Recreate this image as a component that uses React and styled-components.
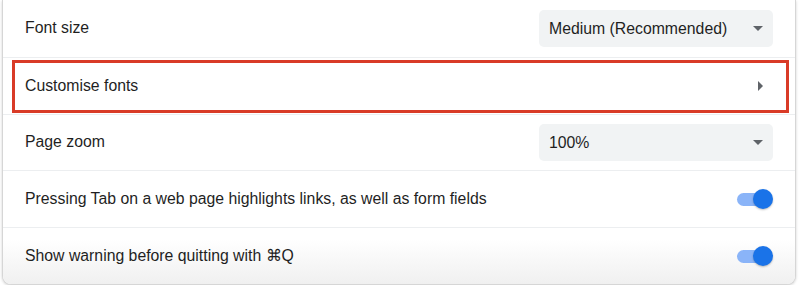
import React from 'react';
import styled, { createGlobalStyle } from 'styled-components';

const GlobalStyle = createGlobalStyle`
    html, body {
        margin: 0;
        padding: 0;
        background: #ffffff;
    }
    body {
        font-family: "Liberation Sans", Arial, sans-serif;
        color: #202124;
    }
`;

const Page = styled.div`
    width: 800px;
    height: 285px;
    padding: 0 4px 0 2px;
    box-sizing: border-box;
    overflow: hidden;
`;

const Card = styled.div`
    background: #ffffff;
    border: 1px solid #d6d6d6;
    border-top: none;
    border-radius: 0 0 9px 9px;
    box-shadow: 0 1px 3px rgba(0, 0, 0, 0.18);
    overflow: hidden;
`;

const Row = styled.div`
    position: relative;
    height: ${(p) => p.h || 57}px;
    display: flex;
    align-items: center;
    justify-content: space-between;
    padding: 0 22px;
    border-top: ${(p) => (p.first ? 'none' : '1px solid #eceef0')};
    background: ${(p) => (p.fade ? 'linear-gradient(#ffffff 20%, #f0f0f0)' : '#ffffff')};
    box-sizing: border-box;
`;

const Label = styled.span`
    font-size: 15.8px;
    color: #1f1f1f;
    margin-top: -1px;
`;

const Select = styled.div`
    width: 234px;
    height: 37px;
    border-radius: 5px;
    background: #f1f3f4;
    display: flex;
    align-items: center;
    justify-content: space-between;
    padding: 0 10px 0 10px;
    box-sizing: border-box;
    font-size: 15.8px;
    color: #1f1f1f;
`;

const DownArrow = styled.span`
    width: 0;
    height: 0;
    border-left: 5px solid transparent;
    border-right: 5px solid transparent;
    border-top: 5px solid #5f6368;
`;

const RightArrow = styled.span`
    width: 0;
    height: 0;
    margin-right: 10px;
    margin-top: -1px;
    border-top: 5px solid transparent;
    border-bottom: 5px solid transparent;
    border-left: 5px solid #5f6368;
`;

const Highlight = styled.div`
    position: absolute;
    top: 2px;
    bottom: 1px;
    left: 9px;
    right: 6px;
    border: 3px solid #d93b27;
    pointer-events: none;
`;

const Toggle = styled.span`
    position: relative;
    width: 36px;
    height: 20px;
    display: flex;
    align-items: center;
`;

const Track = styled.span`
    width: 34px;
    height: 13px;
    border-radius: 7px;
    background: #8ab4f8;
`;

const Knob = styled.span`
    position: absolute;
    right: 0;
    top: 0;
    width: 20px;
    height: 20px;
    border-radius: 50%;
    background: #1a73e8;
    box-shadow: 0 1px 2px rgba(0, 0, 0, 0.25);
`;

function Switch() {
    return (
        <Toggle>
            <Track />
            <Knob />
        </Toggle>
    );
}

export default function App() {
    return (
        <Page>
            <GlobalStyle />
            <Card>
                <Row first>
                    <Label>Font size</Label>
                    <Select>
                        <span>Medium (Recommended)</span>
                        <DownArrow />
                    </Select>
                </Row>
                <Row>
                    <Label>Customise fonts</Label>
                    <RightArrow />
                    <Highlight />
                </Row>
                <Row h={56}>
                    <Label>Page zoom</Label>
                    <Select>
                        <span>100%</span>
                        <DownArrow />
                    </Select>
                </Row>
                <Row>
                    <Label>Pressing Tab on a web page highlights links, as well as form fields</Label>
                    <Switch />
                </Row>
                <Row fade>
                    <Label>Show warning before quitting with ⌘Q</Label>
                    <Switch />
                </Row>
            </Card>
        </Page>
    );
}
